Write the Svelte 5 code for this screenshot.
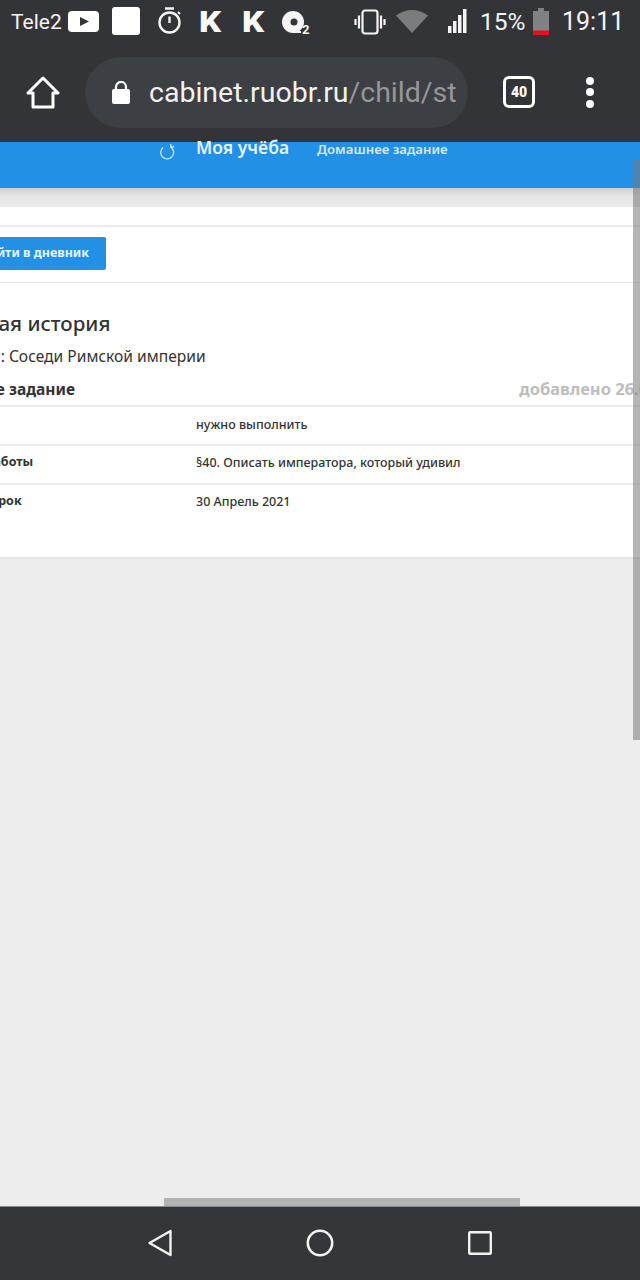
<script>
  const rows = [
    { label: 'Статус', value: 'нужно выполнить' },
    { label: 'Описание работы', value: '§40. Описать императора, который удивил' },
    { label: 'Предельный срок', value: '30 Апрель 2021' }
  ];
</script>

<div class="screen">
  <header class="chrome">
    <div class="status">
      <span class="carrier">Tele2</span>
      <svg class="yt" width="31" height="21" viewBox="0 0 31 21"><rect width="31" height="21" rx="4" fill="#fff"/><path d="M12 6l9 4.500-9 4.500z" fill="#333438"/></svg>
      <span class="square"></span>
      <svg class="watch" width="25" height="27" viewBox="0 0 25 27" fill="none" stroke="#f4f4f4"><circle cx="12.500" cy="15.500" r="10" stroke-width="2.400"/><path d="M8 1.500h9M12.500 9.500v6.500" stroke-width="2.400"/><path d="M21 5l2 2" stroke-width="2"/></svg>
      <span class="k first">K</span>
      <span class="k second">K</span>
      <svg class="disc" width="29" height="24" viewBox="0 0 29 24"><circle cx="11" cy="11" r="11" fill="#f4f4f4"/><circle cx="12" cy="11" r="3.500" fill="#333438"/><path d="M11 21h8" fill="none" stroke="#f4f4f4" stroke-width="2"/><text x="20" y="23" font-size="13" font-weight="700" fill="#f4f4f4" font-family="Roboto">2</text></svg>
      <svg class="vib" width="32" height="26" viewBox="0 0 32 26" fill="none" stroke="#f4f4f4" stroke-width="2.200"><rect x="8.500" y="1.500" width="15" height="23" rx="2.500"/><path d="M5 6.500v13M27 6.500v13M1.500 10v6M30.500 10v6"/></svg>
      <svg class="wifi" width="32" height="24" viewBox="0 0 32 24"><path d="M0 6.500Q16-4.500 32 6.500L16 24z" fill="#7b7c7e"/></svg>
      <svg class="signal" width="19" height="24" viewBox="0 0 19 24" fill="#f4f4f4"><rect x="0" y="17" width="3.500" height="7"/><rect x="5" y="12" width="3.500" height="12"/><rect x="10" y="6" width="3.500" height="18"/><rect x="15" y="0" width="3.500" height="24"/></svg>
      <span class="pct">15%</span>
      <svg class="batt" width="16" height="27" viewBox="0 0 16 27"><path d="M5 0h6v3h5v24H0V3h5z" fill="#808183"/><rect y="22.500" width="16" height="4.500" fill="#e3131b"/></svg>
      <span class="time">19:11</span>
    </div>
    <div class="toolbar">
      <svg class="home" width="34" height="33" viewBox="0 0 34 33" fill="none" stroke="#fff" stroke-width="3" stroke-linejoin="round"><path d="M2 17L17 2l15 15h-5v14H7V17z"/></svg>
      <div class="pill">
        <svg class="lock" width="18" height="23" viewBox="0 0 18 23"><path d="M4 9V6a5 5 0 0 1 10 0v3" fill="none" stroke="#fff" stroke-width="2.200"/><rect y="8" width="18" height="15" rx="2" fill="#fff"/></svg>
        <span class="url"><span class="host">cabinet.ruobr.ru</span><span class="path">/child/st</span></span>
      </div>
      <span class="tabs">40</span>
      <span class="dots"><i></i><i></i><i></i></span>
    </div>
  </header>

  <nav class="blue">
    <svg class="refresh" width="16" height="16" viewBox="0 0 16 16" fill="none" stroke="#cfe6f9" stroke-width="1.300"><path d="M4 3.500a6.500 6.500 0 1 0 8 -.3M15 2.500l-3 .7-.5-3"/></svg>
    <span class="crumb">Моя учёба</span>
    <span class="sub">Домашнее задание</span>
  </nav>
  <div class="shade"></div>

  <main class="page">
    <div class="gap-white"></div>
    <div class="actions"><button>Перейти в дневник</button></div>
    <section class="card">
      <h1>Всеобщая история</h1>
      <p class="topic">Тема урока: Соседи Римской империи</p>
      <div class="hw"><h2>Домашнее задание</h2><span class="added">добавлено 26.04.2021</span></div>
      {#each rows as r}
        <div class="row"><span class="label">{r.label}</span><span class="value">{r.value}</span></div>
      {/each}
    </section>
  </main>

  <footer class="navbar">
    <svg width="24" height="28" viewBox="0 0 24 28" fill="none" stroke="#f2f2f2" stroke-width="2.400" stroke-linejoin="round"><path d="M22.500 2v24L1.500 14z"/></svg>
    <svg width="28" height="28" viewBox="0 0 28 28" fill="none" stroke="#f2f2f2" stroke-width="2.600"><circle cx="14" cy="14" r="12.200"/></svg>
    <svg width="24" height="24" viewBox="0 0 24 24" fill="none" stroke="#f2f2f2" stroke-width="2.400" stroke-linejoin="round"><rect x="1.200" y="1.200" width="21.600" height="21.600" rx="1"/></svg>
  </footer>

  <div class="scroll-v"></div>
  <div class="scroll-h"></div>
</div>

<style>
  :global(body) { margin: 0; background: #ededed; }
  .screen { position: relative; width: 640px; height: 1280px; overflow: hidden; display: flex; flex-direction: column; background: #ededed; font-family: "Noto Sans", sans-serif; }

  .chrome { height: 142px; background: #333438; flex: none; color: #f4f4f4; font-family: Roboto, sans-serif; }
  .status { height: 44px; display: flex; align-items: center; padding-left: 11px; }
  .carrier { font-size: 21px; width: 57px; margin-top: -1px; }
  .yt { margin-top: -1px; }
  .square { width: 28px; height: 28px; background: #fff; border-radius: 3px; margin-left: 13px; margin-top: -2px; }
  .watch { margin-left: 17px; margin-top: -3px; }
  .k { font-size: 30px; font-weight: 900; line-height: 1; width: 24px; color: #f8f8f8; margin-top: -1px; transform: scaleX(1.15); transform-origin: left center; }
  .first { margin-left: 17px; }
  .second { margin-left: 19px; }
  .disc { margin-left: 16px; margin-top: 1px; }
  .vib { margin-left: 43px; margin-top: -1px; }
  .wifi { margin-left: 10px; margin-top: -2px; }
  .signal { margin-left: 20px; margin-top: -2px; }
  .pct { font-size: 24.500px; margin-left: 13px; width: 53px; margin-top: -1px; }
  .batt { margin-top: -1px; }
  .time { font-size: 25px; margin-left: 13px; margin-top: -1px; }

  .toolbar { height: 98px; display: flex; align-items: center; padding-left: 26px; margin-top: -1px; }
  .pill { width: 383px; height: 71px; margin-left: 25px; border-radius: 36px; background: #3c3f43; display: flex; align-items: center; padding-left: 27px; box-sizing: border-box; margin-top: 1px; }
  .lock { flex: none; margin-top: -1px; }
  .url { font-size: 28.500px; margin-left: 19px; width: 307px; overflow: hidden; white-space: nowrap; }
  .host { color: #f1f1f1; }
  .path { color: #95979a; }
  .tabs { width: 32px; height: 32px; margin-left: 35px; box-sizing: border-box; border: 3px solid #fff; border-radius: 6px; color: #fff; font-size: 14px; font-weight: 900; display: flex; align-items: center; justify-content: center; }
  .dots { display: flex; flex-direction: column; gap: 3.500px; margin-left: 51px; }
  .dots i { width: 8px; height: 8px; border-radius: 50%; background: #fff; display: block; }

  .blue { height: 46px; background: #2290e4; flex: none; display: flex; align-items: flex-start; padding-left: 159px; box-sizing: border-box; color: #e4f2fc; }
  .refresh { margin-top: 2px; }
  .crumb { font-size: 17.500px; font-weight: 600; margin-left: 21px; line-height: 14px; margin-top: -2px; }
  .sub { font-size: 13.200px; font-weight: 600; margin-left: 28px; line-height: 16px; color: #d3e9fa; margin-top: -1px; }
  .shade { height: 19px; flex: none; background: linear-gradient(#cfcfcf, #e6e6e6 45%, #ebebeb); }

  .page { background: #fff; flex: none; height: 352px; border-bottom: 2px solid #e4e4e4; box-sizing: border-box; }
  .gap-white { height: 18px; border-bottom: 2px solid #ececec; }
  .actions { height: 56px; border-bottom: 1px solid #e4e4e4; padding-top: 10px; box-sizing: border-box; margin-left: -65px; }
  button { height: 33px; padding: 0 17px 2px; border: 0; border-radius: 2px; background: #2290e4; color: #e9f4fd; font: 700 12.500px "Noto Sans", sans-serif; width: 171px; text-align: right; }

  .card { margin-left: -82px; width: 800px; }
  h1 { margin: 0 0 0 2px; font-size: 20.500px; font-weight: 500; color: #333; line-height: 28px; padding-top: 26px; }
  .topic { margin: 0 0 0 -2px; font-size: 15.600px; color: #333; line-height: 20px; padding-top: 9px; }
  .hw { display: flex; justify-content: space-between; padding-top: 11px; align-items: baseline; border-bottom: 2px solid #ececec; height: 21px; padding-bottom: 7px; }
  h2 { margin: 0; font-size: 15.500px; font-weight: 700; color: #333; line-height: 21px; }
  .added { font-size: 16.500px; font-weight: 700; color: #bdbdbd; padding-right: 18px; }
  .row { display: flex; height: 37px; border-bottom: 2px solid #ececec; font-size: 12.500px; color: #333; }
  .row:last-child { border-bottom: 0; }
  .label { width: 278px; font-weight: 700; line-height: 31px; }
  .value { font-weight: 500; line-height: 35px; }
  .row:nth-child(n+5) .label { line-height: 32px; }
  .row:nth-child(n+5) .value { line-height: 34px; }
  .row:last-child .label { margin-left: -12px; width: 290px; }

  .navbar { position: absolute; left: 0; right: 0; bottom: 0; height: 74px; background: #35363a; border-top: 1px solid #8a8a8a; box-sizing: border-box; display: flex; align-items: center; justify-content: space-between; padding: 0 148px 2px 148px; }

  .scroll-v { position: absolute; left: 633px; width: 7px; top: 160px; height: 580px; background: rgba(120,120,120,.55); }
  .scroll-h { position: absolute; left: 164px; width: 356px; top: 1198px; height: 8px; background: #b2b2b0; }
</style>
